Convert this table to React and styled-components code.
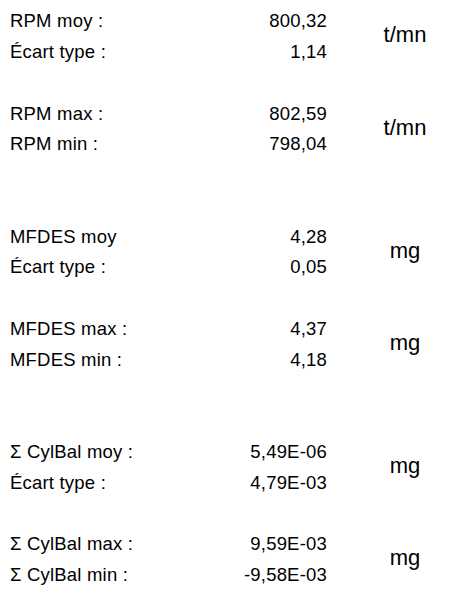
import React from 'react';
import styled, { createGlobalStyle } from 'styled-components';

const GlobalStyle = createGlobalStyle`
  body {
    margin: 0;
    background: #ffffff;
    font-family: "Liberation Sans", Arial, sans-serif;
    color: #000000;
  }
`;

const ROW = 30.75;

// Sheet layout
const Sheet = styled.div`
  width: 458px;
  padding: 6px 0 0 10px;
  box-sizing: border-box;
  display: flex;
  flex-direction: column;
  gap: ${ROW * 2}px;
`;

const Section = styled.div`
  display: flex;
  flex-direction: column;
  gap: ${ROW}px;
`;

const Block = styled.div`
  display: grid;
  grid-template-columns: 200px 117px 131px;
  grid-template-rows: ${ROW}px ${ROW}px;
  align-items: center;
`;

const Label = styled.div`
  font-size: 18.5px;
  letter-spacing: 0.2px;
  white-space: nowrap;
`;

const Value = styled.div`
  font-size: 18.5px;
  letter-spacing: 0.2px;
  text-align: right;
  white-space: nowrap;
`;

const Unit = styled.div`
  grid-column: 3;
  grid-row: 1 / span 2;
  padding-left: 25px;
  font-size: 22px;
  text-align: center;
  align-self: center;
  margin-top: -3px;
`;

const sections = [
  [
    { rows: [['RPM moy :', '800,32'], ['Écart type :', '1,14']], unit: 't/mn' },
    { rows: [['RPM max :', '802,59'], ['RPM min :', '798,04']], unit: 't/mn' },
  ],
  [
    { rows: [['MFDES moy', '4,28'], ['Écart type :', '0,05']], unit: 'mg' },
    { rows: [['MFDES max :', '4,37'], ['MFDES min :', '4,18']], unit: 'mg' },
  ],
  [
    { rows: [['Σ CylBal moy :', '5,49E-06'], ['Écart type :', '4,79E-03']], unit: 'mg' },
    { rows: [['Σ CylBal max :', '9,59E-03'], ['Σ CylBal min :', '-9,58E-03']], unit: 'mg' },
  ],
];

const App = () => (
  <>
    <GlobalStyle />
    <Sheet>
      {sections.map((blocks, si) => (
        <Section key={si}>
          {blocks.map((block, bi) => (
            <Block key={bi}>
              {block.rows.map(([label, value], ri) => (
                <React.Fragment key={ri}>
                  <Label style={{ gridRow: ri + 1 }}>{label}</Label>
                  <Value style={{ gridRow: ri + 1 }}>{value}</Value>
                </React.Fragment>
              ))}
              <Unit>{block.unit}</Unit>
            </Block>
          ))}
        </Section>
      ))}
    </Sheet>
  </>
);

export default App;
